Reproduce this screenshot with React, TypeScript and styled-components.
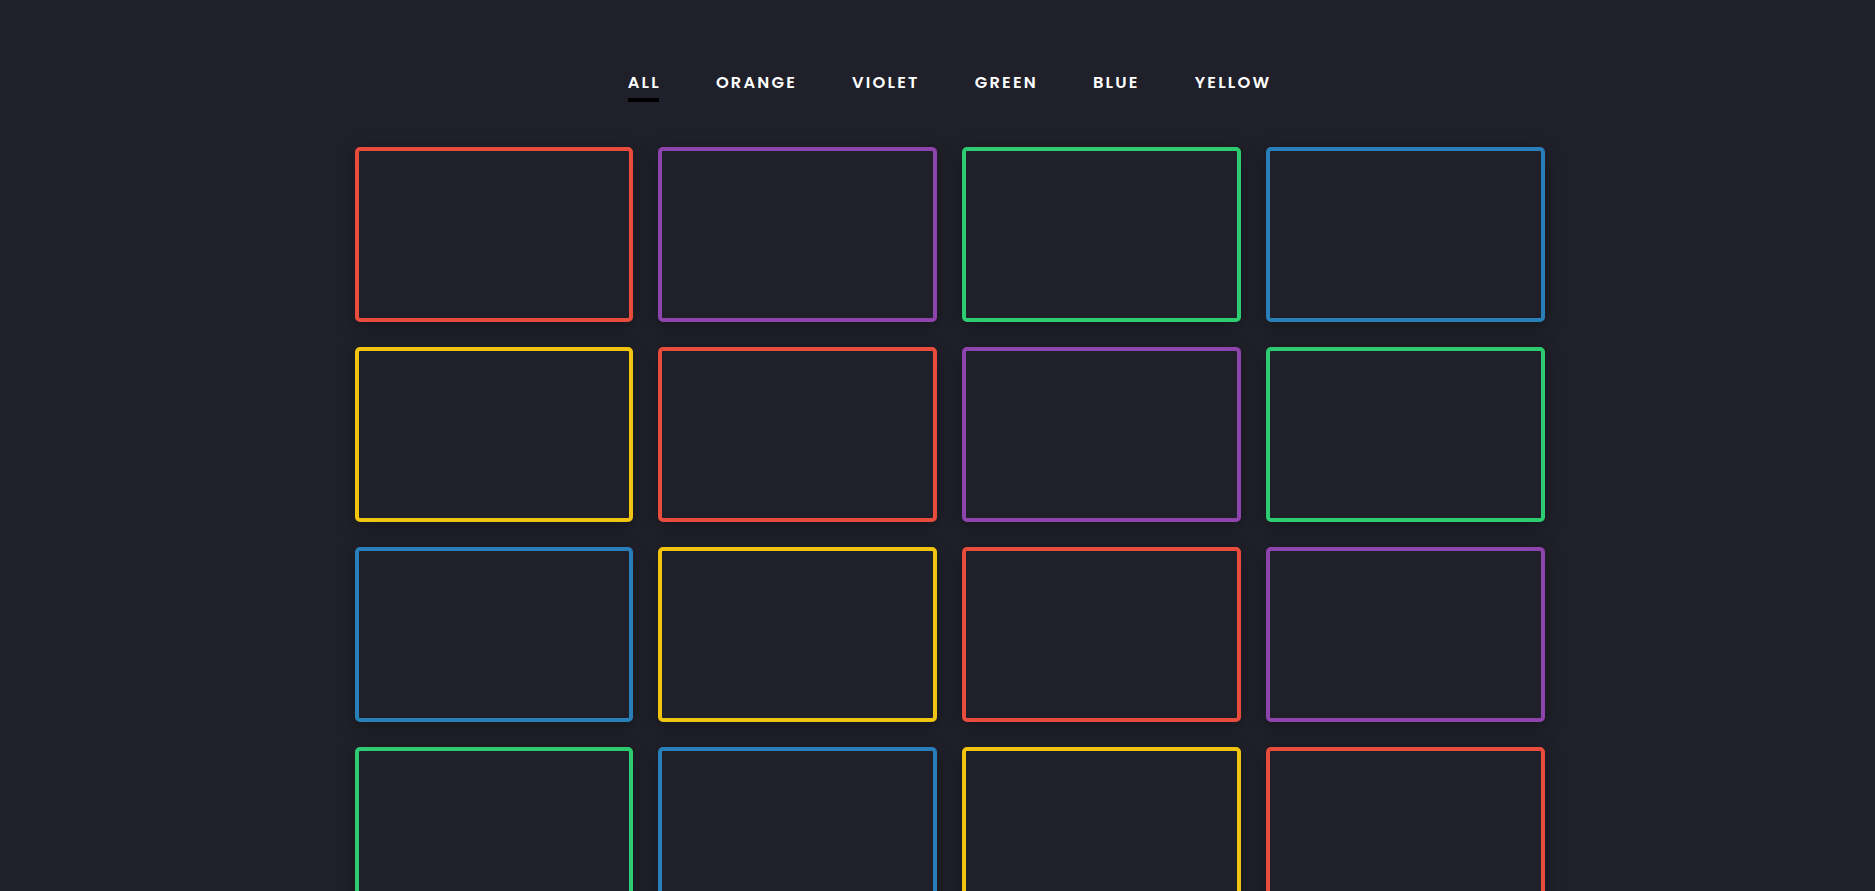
import React, { useState } from "react";
import styled, { createGlobalStyle } from "styled-components";

const GlobalStyle = createGlobalStyle`
  html, body {
    margin: 0;
    padding: 0;
    background: #20202a;
    overflow: hidden;
  }
  * { box-sizing: border-box; }
`;

const Page = styled.div`
  width: 1214px;
  margin: 0 auto;
  padding-left: 24px;
`;

const Nav = styled.nav`
  display: flex;
  justify-content: center;
  gap: 55px;
  padding-top: 70px;
  height: 147px;
`;

const Tab = styled.button<{ $active?: boolean }>`
  position: relative;
  background: none;
  border: none;
  padding: 0;
  height: 26px;
  font-family: "Poppins", "Open Sans", sans-serif;
  font-weight: 600;
  font-size: 16.3px;
  letter-spacing: 2.2px;
  color: #ffffff;
  cursor: pointer;
  line-height: 20px;
  align-self: flex-start;

  &::after {
    content: "";
    display: ${(p) => (p.$active ? "block" : "none")};
    position: absolute;
    left: 0;
    right: 2px;
    top: 28px;
    height: 4px;
    background: #000000;
  }
`;

const Grid = styled.div`
  display: grid;
  grid-template-columns: repeat(4, 1fr);
  column-gap: 25px;
  row-gap: 25px;
`;

const Card = styled.div<{ $color: string }>`
  height: 175px;
  border: 4px solid ${(p) => p.$color};
  border-radius: 5px;
  background: #20202a;
  box-shadow: 0 4px 18px rgba(0, 0, 0, 0.35);
`;

const COLORS: Record<string, string> = {
  orange: "#e74c3c",
  violet: "#8e44ad",
  green: "#2ecc71",
  blue: "#2980b9",
  yellow: "#f1c40f",
};

const ORDER = ["orange", "violet", "green", "blue", "yellow"];
const TABS = ["ALL", "ORANGE", "VIOLET", "GREEN", "BLUE", "YELLOW"];

export default function App() {
  const [active, setActive] = useState("ALL");
  const cards = Array.from({ length: 16 }, (_, i) => ORDER[i % 5]);
  const shown = active === "ALL" ? cards : cards.filter((c) => c === active.toLowerCase());
  return (
    <>
      <GlobalStyle />
      <Page>
        <Nav>
          {TABS.map((t) => (
            <Tab key={t} $active={t === active} onClick={() => setActive(t)}>
              {t}
            </Tab>
          ))}
        </Nav>
        <Grid>
          {shown.map((c, i) => (
            <Card key={i} $color={COLORS[c]} />
          ))}
        </Grid>
      </Page>
    </>
  );
}
